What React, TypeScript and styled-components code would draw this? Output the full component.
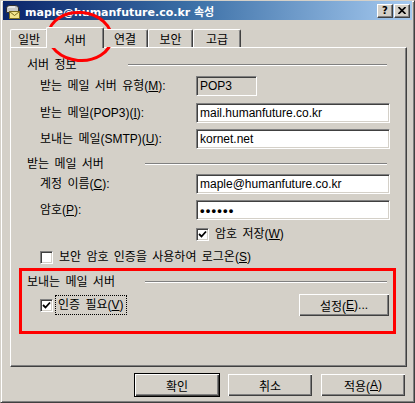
import * as React from "react";
import styled, { createGlobalStyle } from "styled-components";

const FACE = "#d4d0c8";
const SHADOW = "#808080";
const DARK = "#404040";
const UI_FONT = `"Liberation Sans", "Noto Sans CJK KR", sans-serif`;

const GlobalStyle = createGlobalStyle`
  html, body {
    margin: 0;
    padding: 0;
    background: ${FACE};
  }
`;

const Window = styled.div`
  position: relative;
  width: 415px;
  height: 403px;
  box-sizing: border-box;
  background: ${FACE};
  border-top: 1px solid ${FACE};
  border-left: 1px solid ${FACE};
  border-right: 1px solid ${DARK};
  border-bottom: 1px solid ${DARK};
  box-shadow: inset 1px 1px #fff, inset -1px -1px ${SHADOW};
  padding: 0 2px 2px 2px;
  display: flex;
  flex-direction: column;
  font-family: ${UI_FONT};
  font-size: 12px;
  color: #000;
`;

const TitleBar = styled.div`
  height: 19px;
  display: flex;
  align-items: center;
  padding-left: 2px;
  background: linear-gradient(90deg, #0a246a 0%, #3a6ea5 45%, #a6caf0 100%);
`;

const TitleText = styled.span`
  margin-left: 4px;
  flex: 1;
  color: #fff;
  font-family: "DejaVu Sans", "Noto Sans CJK KR", sans-serif;
  font-weight: bold;
  font-size: 11px;
  white-space: nowrap;
`;

const CaptionButtons = styled.div`
  display: flex;
  gap: 1px;
  margin-right: 2px;
`;

const CaptionButton = styled.div`
  width: 16px;
  height: 14px;
  box-sizing: border-box;
  background: ${FACE};
  border-top: 1px solid #fff;
  border-left: 1px solid #fff;
  border-right: 1px solid ${DARK};
  border-bottom: 1px solid ${DARK};
  box-shadow: inset -1px -1px ${SHADOW};
  display: flex;
  align-items: center;
  justify-content: center;
  font-family: "DejaVu Sans", sans-serif;
  font-weight: bold;
  font-size: 10px;
  line-height: 1;
`;

const Body = styled.div`
  flex: 1;
  display: flex;
  flex-direction: column;
  padding: 7px 5px 0 7px;
`;

const TabStrip = styled.div`
  display: flex;
  align-items: flex-end;
  height: 20px;
  position: relative;
  z-index: 1;
`;

const Tab = styled.div<{ $width: number; $active?: boolean }>`
  width: ${({ $width }) => $width}px;
  height: ${({ $active }) => ($active ? 21 : 18)}px;
  margin: ${({ $active }) => ($active ? "0 -2px -1px -2px" : "0")};
  position: relative;
  z-index: ${({ $active }) => ($active ? 2 : 1)};
  box-sizing: border-box;
  background: ${FACE};
  border-top: 1px solid #fff;
  border-left: 1px solid #fff;
  border-right: 1px solid ${DARK};
  border-radius: 2px 2px 0 0;
  box-shadow: inset -1px 0 ${SHADOW};
  display: flex;
  align-items: ${({ $active }) => ($active ? "flex-start" : "center")};
  padding-top: ${({ $active }) => ($active ? 3 : 0)}px;
  justify-content: center;
  font-size: 12px;
`;

const Panel = styled.div`
  width: 397px;
  height: 320px;
  box-sizing: border-box;
  border-top: 1px solid #fff;
  border-left: 1px solid #fff;
  border-right: 1px solid ${DARK};
  border-bottom: 1px solid ${DARK};
  box-shadow: inset -1px -1px ${SHADOW};
  padding: 10px 0 0 16px;
  display: flex;
  flex-direction: column;
`;

const SectionHeader = styled.div<{ $top?: number }>`
  width: 360px;
  height: 14px;
  display: flex;
  align-items: center;
  margin-top: ${({ $top }) => $top ?? 0}px;
`;

const HeaderLabel = styled.span<{ $width: number }>`
  width: ${({ $width }) => $width}px;
  line-height: 14px;
  word-spacing: 2px;
  white-space: nowrap;
`;

const EtchedLine = styled.div`
  flex: 1;
  height: 0;
  border-top: 1px solid ${SHADOW};
  border-bottom: 1px solid #fff;
`;

const FieldRow = styled.div<{ $top: number }>`
  display: grid;
  grid-template-columns: 156px 194px;
  align-items: center;
  height: 20px;
  margin: ${({ $top }) => $top}px 0 0 13px;
`;

const Label = styled.span`
  line-height: 14px;
  word-spacing: 2px;
  white-space: nowrap;
`;

const TextBox = styled.div<{ $width?: number; $readOnly?: boolean }>`
  width: ${({ $width }) => ($width ? `${$width}px` : "100%")};
  height: 20px;
  box-sizing: border-box;
  background: ${({ $readOnly }) => ($readOnly ? FACE : "#fff")};
  border-top: 1px solid ${SHADOW};
  border-left: 1px solid ${SHADOW};
  border-right: 1px solid #fff;
  border-bottom: 1px solid #fff;
  box-shadow: inset 1px 1px ${DARK}, inset -1px -1px ${FACE};
  padding: 0 3px;
  display: flex;
  align-items: center;
  font-size: 12px;
  white-space: nowrap;
  overflow: hidden;
`;

const Dots = styled.span`
  font-family: "Liberation Sans", sans-serif;
  font-weight: bold;
  font-size: 13px;
  letter-spacing: 1.2px;
`;

const CheckRow = styled.div<{ $top: number; $left: number }>`
  display: flex;
  align-items: center;
  gap: 6px;
  height: 14px;
  margin: ${({ $top }) => $top}px 0 0 ${({ $left }) => $left}px;
`;

const Box = styled.div`
  width: 13px;
  height: 13px;
  box-sizing: border-box;
  background: #fff;
  border-top: 1px solid ${SHADOW};
  border-left: 1px solid ${SHADOW};
  border-right: 1px solid #fff;
  border-bottom: 1px solid #fff;
  box-shadow: inset 1px 1px ${DARK}, inset -1px -1px ${FACE};
  display: flex;
  align-items: center;
  justify-content: center;
`;

const FocusLabel = styled.span`
  outline: 1px dotted #000;
  outline-offset: 2px;
  line-height: 14px;
  word-spacing: 2px;
  margin-left: -1px;
`;

const Highlight = styled.div`
  width: 377px;
  box-sizing: border-box;
  margin: 4px 0 0 -8px;
  border: 3px solid #ff0000;
  padding: 4px 0 14px 5px;
`;

const AuthRow = styled.div`
  display: flex;
  align-items: center;
  justify-content: space-between;
  width: 350px;
  height: 24px;
  margin: 4px 0 0 13px;
`;

const AuthCheck = styled.div`
  display: flex;
  align-items: center;
  gap: 6px;
`;

const Button = styled.div<{ $width: number; $default?: boolean }>`
  width: ${({ $width }) => $width}px;
  height: 24px;
  box-sizing: border-box;
  background: ${FACE};
  border: 1px solid ${({ $default }) => ($default ? "#000" : "transparent")};
  box-shadow: inset 1px 1px #fff, inset -1px -1px ${DARK}, inset -2px -2px ${SHADOW};
  display: flex;
  align-items: center;
  justify-content: center;
  font-size: 12px;
  word-spacing: 1px;
`;

const ButtonBar = styled.div`
  display: flex;
  justify-content: flex-end;
  gap: 7px;
  margin: 6px 1px 0 0;
`;

const Ring = styled.svg`
  position: absolute;
  left: 44px;
  top: 8px;
  pointer-events: none;
`;

const MailIcon = () => (
  <svg width="16" height="16" viewBox="0 0 16 16">
    <path
      d="M1.5 9.5 V5 Q1.5 2.5 5 2.5 H10 Q13.5 2.5 13.5 5 V9.5 Z"
      fill="#c8c8c8"
      stroke="#303030"
    />
    <path d="M3 5 Q3 4 5 4 H10" fill="none" stroke="#fff" />
    <rect x="4.5" y="8.5" width="10" height="7" fill="#f4e48c" stroke="#7a6a20" />
    <path d="M4.5 8.5 L9.5 12.5 L14.5 8.5" fill="none" stroke="#7a6a20" />
  </svg>
);

const Check = () => (
  <svg width="9" height="9" viewBox="0 0 9 9">
    <path d="M1 4 L3.5 6.5 L8 1.5" fill="none" stroke="#000" strokeWidth="1.8" />
  </svg>
);

const CheckBox = ({ checked }: { checked?: boolean }) => <Box>{checked && <Check />}</Box>;

const tabs = [
  { label: "일반", width: 38 },
  { label: "서버", width: 58, active: true },
  { label: "연결", width: 46 },
  { label: "보안", width: 45 },
  { label: "고급", width: 48 },
];

export default function App() {
  return (
    <>
      <GlobalStyle />
      <Window>
        <TitleBar>
          <MailIcon />
          <TitleText>maple@humanfuture.co.kr 속성</TitleText>
          <CaptionButtons>
            <CaptionButton>?</CaptionButton>
            <CaptionButton>
              <svg width="8" height="7" viewBox="0 0 8 7">
                <path d="M0.5 0 L7.5 7 M7.5 0 L0.5 7" stroke="#000" strokeWidth="1.6" />
              </svg>
            </CaptionButton>
          </CaptionButtons>
        </TitleBar>

        <Body>
          <TabStrip>
            {tabs.map((t) => (
              <Tab key={t.label} $width={t.width} $active={t.active}>
                {t.label}
              </Tab>
            ))}
          </TabStrip>

          <Panel>
            <SectionHeader>
              <HeaderLabel $width={101}>서버 정보</HeaderLabel>
              <EtchedLine />
            </SectionHeader>
            <FieldRow $top={4}>
              <Label>
                받는 메일 서버 유형(<u>M</u>):
              </Label>
              <TextBox $width={61} $readOnly>
                POP3
              </TextBox>
            </FieldRow>
            <FieldRow $top={7}>
              <Label>
                받는 메일(POP3)(<u>I</u>):
              </Label>
              <TextBox>mail.humanfuture.co.kr</TextBox>
            </FieldRow>
            <FieldRow $top={6}>
              <Label>
                보내는 메일(SMTP)(<u>U</u>):
              </Label>
              <TextBox>kornet.net</TextBox>
            </FieldRow>

            <SectionHeader $top={8}>
              <HeaderLabel $width={118}>받는 메일 서버</HeaderLabel>
              <EtchedLine />
            </SectionHeader>
            <FieldRow $top={3}>
              <Label>
                계정 이름(<u>C</u>):
              </Label>
              <TextBox>maple@humanfuture.co.kr</TextBox>
            </FieldRow>
            <FieldRow $top={6}>
              <Label>
                암호(<u>P</u>):
              </Label>
              <TextBox>
                <Dots>••••••</Dots>
              </TextBox>
            </FieldRow>
            <CheckRow $top={7} $left={169}>
              <CheckBox checked />
              <Label>
                암호 저장(<u>W</u>)
              </Label>
            </CheckRow>
            <CheckRow $top={9} $left={13}>
              <CheckBox />
              <Label>
                보안 암호 인증을 사용하여 로그온(<u>S</u>)
              </Label>
            </CheckRow>

            <Highlight>
              <SectionHeader>
                <HeaderLabel $width={118}>보내는 메일 서버</HeaderLabel>
                <EtchedLine />
              </SectionHeader>
              <AuthRow>
                <AuthCheck>
                  <CheckBox checked />
                  <FocusLabel>
                    인증 필요(<u>V</u>)
                  </FocusLabel>
                </AuthCheck>
                <Button $width={92}>
                  설정(<u>E</u>)...
                </Button>
              </AuthRow>
            </Highlight>
          </Panel>

          <ButtonBar>
            <Button $width={86} $default>
              확인
            </Button>
            <Button $width={86}>취소</Button>
            <Button $width={86}>
              적용(<u>A</u>)
            </Button>
          </ButtonBar>
        </Body>

        <Ring width="72" height="56" viewBox="0 0 72 56">
          <ellipse
            cx="35"
            cy="27.5"
            rx="31.5"
            ry="24"
            fill="none"
            stroke="#ff0000"
            strokeWidth="3"
            transform="rotate(5 35 27.5)"
          />
        </Ring>
      </Window>
    </>
  );
}
